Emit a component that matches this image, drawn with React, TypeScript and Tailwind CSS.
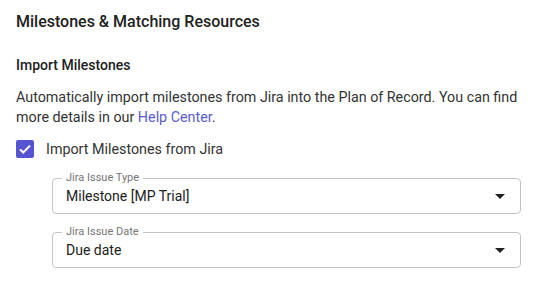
import React from 'react';

function SelectField({ label, value }: { label: string; value: string }) {
  return (
    <div className="relative h-9 w-[469px] rounded border border-[#c4c4c4] bg-white">
      <span className="absolute -top-[7px] left-[9px] bg-white px-[4px] text-[11px] leading-[12px] text-[#757575]">
        {label}
      </span>
      <div className="flex h-full items-center justify-between pl-[13px] pr-[14px]">
        <span className="text-[14px] text-[#212121]">{value}</span>
        <svg width="10" height="5" viewBox="0 0 10 5" className="mr-[1px]">
          <path d="M0 0h10L5 5z" fill="#212121" />
        </svg>
      </div>
    </div>
  );
}

export default function App() {
  return (
    <div className="min-h-screen bg-white px-4 pt-[12px] font-['Roboto',sans-serif] text-[#212121]">
      <h2 className="text-[16px] font-medium leading-5">Milestones &amp; Matching Resources</h2>
      <h3 className="mt-[23px] text-[14px] font-medium leading-5">Import Milestones</h3>
      <p className="mt-[12px] text-[14.3px] leading-5 text-[#333]">
        Automatically import milestones from Jira into the Plan of Record. You can find more details in our{' '}
        <a className="text-[#5b5bd6]">Help Center</a>.
      </p>
      <label className="mt-[12px] flex items-center gap-3">
        <span className="flex h-[18px] w-[18px] items-center justify-center rounded-[2px] bg-[#5654d0]">
          <svg width="16" height="16" viewBox="0 0 24 24">
            <path d="M4.5 12.5l4.8 4.8L19.5 7" fill="none" stroke="white" strokeWidth="3" />
          </svg>
        </span>
        <span className="text-[14.3px] leading-5 text-[#333]">Import Milestones from Jira</span>
      </label>
      <div className="ml-[36px] mt-[19px] flex flex-col gap-[18px]">
        <SelectField label="Jira Issue Type" value="Milestone [MP Trial]" />
        <SelectField label="Jira Issue Date" value="Due date" />
      </div>
    </div>
  );
}
